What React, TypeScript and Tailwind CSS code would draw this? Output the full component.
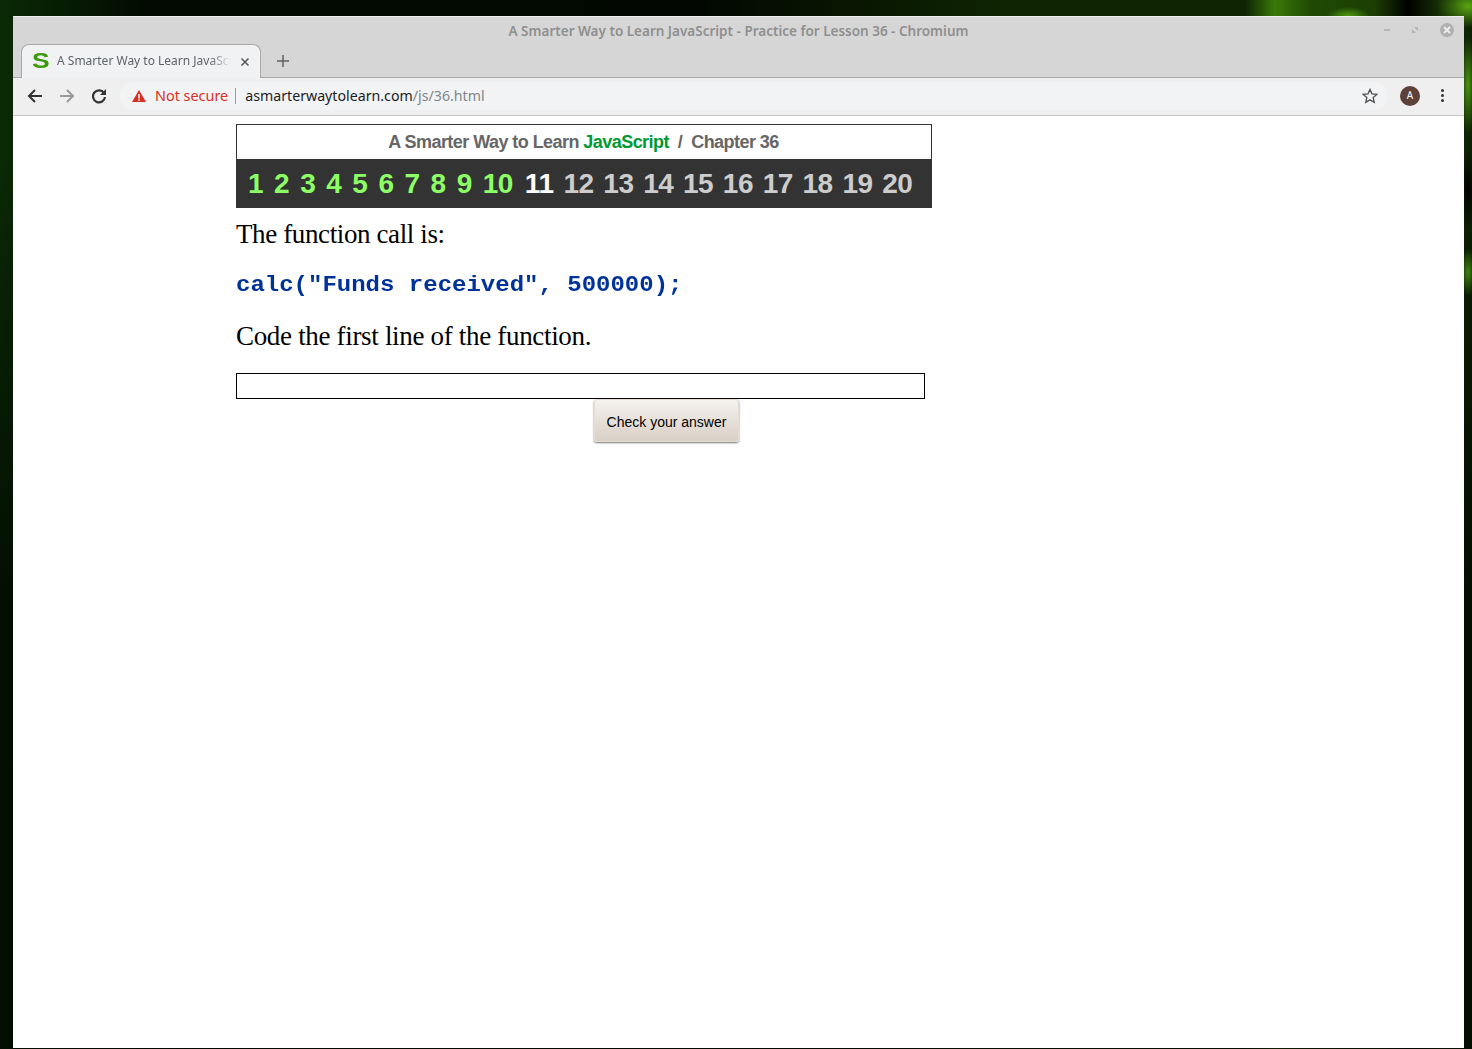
import React from "react";

const greens = ["1","2","3","4","5","6","7","8","9","10"];
const grays = ["12","13","14","15","16","17","18","19","20"];

export default function App() {
  return (
    <div className="h-[1049px] w-full overflow-hidden pt-4 pl-[13px] pr-2 pb-px bg-[radial-gradient(ellipse_22px_9px_at_1348px_16px,#4f9a10,transparent),radial-gradient(ellipse_30px_22px_at_1468px_6px,#5aa512,transparent),radial-gradient(ellipse_8px_50px_at_1468px_85px,#4a9412,transparent),radial-gradient(ellipse_8px_24px_at_1468px_272px,#3f8410,transparent),radial-gradient(ellipse_8px_40px_at_1468px_190px,#000,transparent),linear-gradient(180deg,transparent_150px,#020802cc_600px),linear-gradient(90deg,#0a2a05_0px,#020a01_150px,#020801_700px,#0e2402_1000px,#0e2402_1245px,#3a7a08_1275px,#1f4a04_1310px,#1c3e04_1375px,#000_1408px,#173005_1440px,#0c2004_1472px)]">
      <div className="flex h-full flex-col bg-white">
        {/* title bar */}
        <div className="relative h-[62px] shrink-0 border-b border-t border-b-[#a8a8a8] border-t-[#eeeeee] bg-[#d6d6d6]">
          <div className="flex h-[28px] items-center justify-center font-['Noto_Sans',sans-serif] text-[13.5px] font-semibold text-[#8f8f8f]">
            A Smarter Way to Learn JavaScript - Practice for Lesson 36 - Chromium
          </div>
          <div className="absolute right-[10px] top-[6px] flex items-center gap-[22px]">
            <div className="h-[2px] w-[6px] bg-[#b4b4b4]" />
            <svg width="6" height="6" viewBox="0 0 6 6"><path d="M0 6V2L4 6zM6 0v4L2 0z" fill="#b4b4b4" /></svg>
            <div className="flex h-[14px] w-[14px] items-center justify-center rounded-full bg-[#b0b0b0]">
              <svg width="8" height="8" viewBox="0 0 8 8"><path d="M1 1l6 6M7 1L1 7" stroke="#ececec" strokeWidth="2" /></svg>
            </div>
          </div>
          <div className="absolute left-[8px] top-[27px] flex h-[34px] w-[240px] items-center rounded-t-lg border border-b-0 border-[#a8a8a8] bg-[#f1f2f3] pl-[10px]">
            <span className="w-[25px] origin-left scale-x-[1.2] pb-[1px] font-['Liberation_Sans',sans-serif] text-[22px] font-bold leading-none text-[#3a9a0a]">S</span>
            <span className="w-[174px] overflow-hidden whitespace-nowrap pb-[2px] font-['Noto_Sans',sans-serif] text-[12px] text-[#5f6368] [mask-image:linear-gradient(90deg,#000_88%,transparent)]">A Smarter Way to Learn JavaScript</span>
            <svg className="ml-[9px]" width="10" height="10" viewBox="0 0 10 10"><path d="M1.5 1.5l7 7M8.5 1.5l-7 7" stroke="#5a5a5a" strokeWidth="1.6" /></svg>
          </div>
          <svg className="absolute left-[264px] top-[38px]" width="12" height="12" viewBox="0 0 12 12"><path d="M6 0v12M0 6h12" stroke="#606060" strokeWidth="1.5" /></svg>
        </div>
        {/* toolbar */}
        <div className="flex h-[38px] shrink-0 items-center border-b border-[#c4c4c4] bg-[#efefef] pb-[2px] pl-[14px]">
          <svg width="16" height="16" viewBox="0 0 16 16"><path d="M15 8H2M8 2L2 8l6 6" fill="none" stroke="#333" strokeWidth="2" /></svg>
          <svg className="ml-[16px]" width="16" height="16" viewBox="0 0 16 16"><path d="M1 8h13M8 2l6 6-6 6" fill="none" stroke="#9a9a9a" strokeWidth="2" /></svg>
          <svg className="ml-[16px]" width="16" height="16" viewBox="0 0 16 16"><path d="M13 5a6 6 0 1 0 1 4" fill="none" stroke="#333" strokeWidth="2.2" /><path d="M15 1v6H9z" fill="#333" /></svg>
          <div className="ml-[13px] flex h-[28px] flex-1 items-center rounded-full bg-[#f2f3f4] pl-[10px]">
            <svg className="ml-[1px]" width="16" height="14" viewBox="0 0 16 14"><path d="M8 1l7 12H1z" fill="#d93025" /><path d="M8 5v4.500M8 10.500v1.500" stroke="#fff" strokeWidth="1.5" /></svg>
            <span className="ml-[8px] pt-[2px] font-['Noto_Sans',sans-serif] text-[14.4px] leading-none text-[#d93025]">Not secure</span>
            <span className="ml-[7px] h-[16px] w-px bg-[#9a9a9a]" />
            <span className="ml-[9px] pt-[2px] font-['Noto_Sans',sans-serif] text-[14.2px] leading-none text-[#202124]">asmarterwaytolearn.com<span className="text-[#80868b]">/js/36.html</span></span>
            <svg className="ml-auto mr-[10px]" width="16" height="16" viewBox="0 0 16 16"><path d="M8 1.500l2 4.400 4.800.5-3.600 3.200 1 4.700L8 11.900l-4.200 2.400 1-4.700L1.200 6.400 6 5.900z" fill="none" stroke="#555" strokeWidth="1.4" /></svg>
          </div>
          <div className="ml-[12px] flex h-5 w-5 items-center justify-center rounded-full bg-[#5d4037] font-['Noto_Sans',sans-serif] text-[10px] text-white">A</div>
          <div className="ml-[21px] mr-[20px] flex flex-col gap-[2px]">
            <span className="h-[3px] w-[3px] rounded-full bg-[#333]" />
            <span className="h-[3px] w-[3px] rounded-full bg-[#333]" />
            <span className="h-[3px] w-[3px] rounded-full bg-[#333]" />
          </div>
        </div>
        {/* page */}
        <div className="flex-1 bg-white pl-[223px] pt-2">
          <div className="w-[696px] border border-b-0 border-[#333]">
            <div className="flex h-[34px] items-center justify-center pr-[1px] font-['Liberation_Sans',sans-serif] text-[18px] font-bold tracking-[-0.55px] text-[#666]">
              A Smarter Way to Learn&nbsp;<span className="text-[#009933]">JavaScript</span>&nbsp;&nbsp;/&nbsp;&nbsp;Chapter 36
            </div>
          </div>
          <div className="flex h-[49px] w-[696px] items-center bg-[#333] pl-[12px] pt-px font-['Liberation_Sans',sans-serif] text-[28px] font-bold tracking-[-0.5px]">
            <div className="flex gap-[11px] text-[#8cff66]">
              {greens.map((n) => <span key={n}>{n}</span>)}
            </div>
            <span className="ml-[12px] text-white">11</span>
            <div className="ml-[10px] flex gap-[9.7px] text-[#cccccc]">
              {grays.map((n) => <span key={n}>{n}</span>)}
            </div>
          </div>
          <p className="mt-[9px] font-['Liberation_Serif',serif] text-[27px] leading-[34px] tracking-[-0.38px] text-black">The function call is:</p>
          <p className="mt-[16px] origin-bottom scale-y-[0.9] font-['Liberation_Mono',monospace] text-[24px] font-bold leading-[34px] text-[#003399]">calc("Funds received", 500000);</p>
          <p className="mt-[18px] font-['Liberation_Serif',serif] text-[27px] leading-[34px] tracking-[-0.32px] text-black">Code the first line of the function.</p>
          <div className="mt-[20px] h-[26px] w-[689px] border border-black bg-white" />
          <div className="flex w-[861px] justify-center">
            <button className="h-[43px] w-[145px] rounded-[3px] border border-[#e2dcd5] bg-[linear-gradient(#f5f2ee,#d9cfc5)] pt-[3px] font-['Liberation_Sans',sans-serif] text-[14px] text-black shadow-[0_1px_2px_#777]">Check your answer</button>
          </div>
        </div>
      </div>
    </div>
  );
}
